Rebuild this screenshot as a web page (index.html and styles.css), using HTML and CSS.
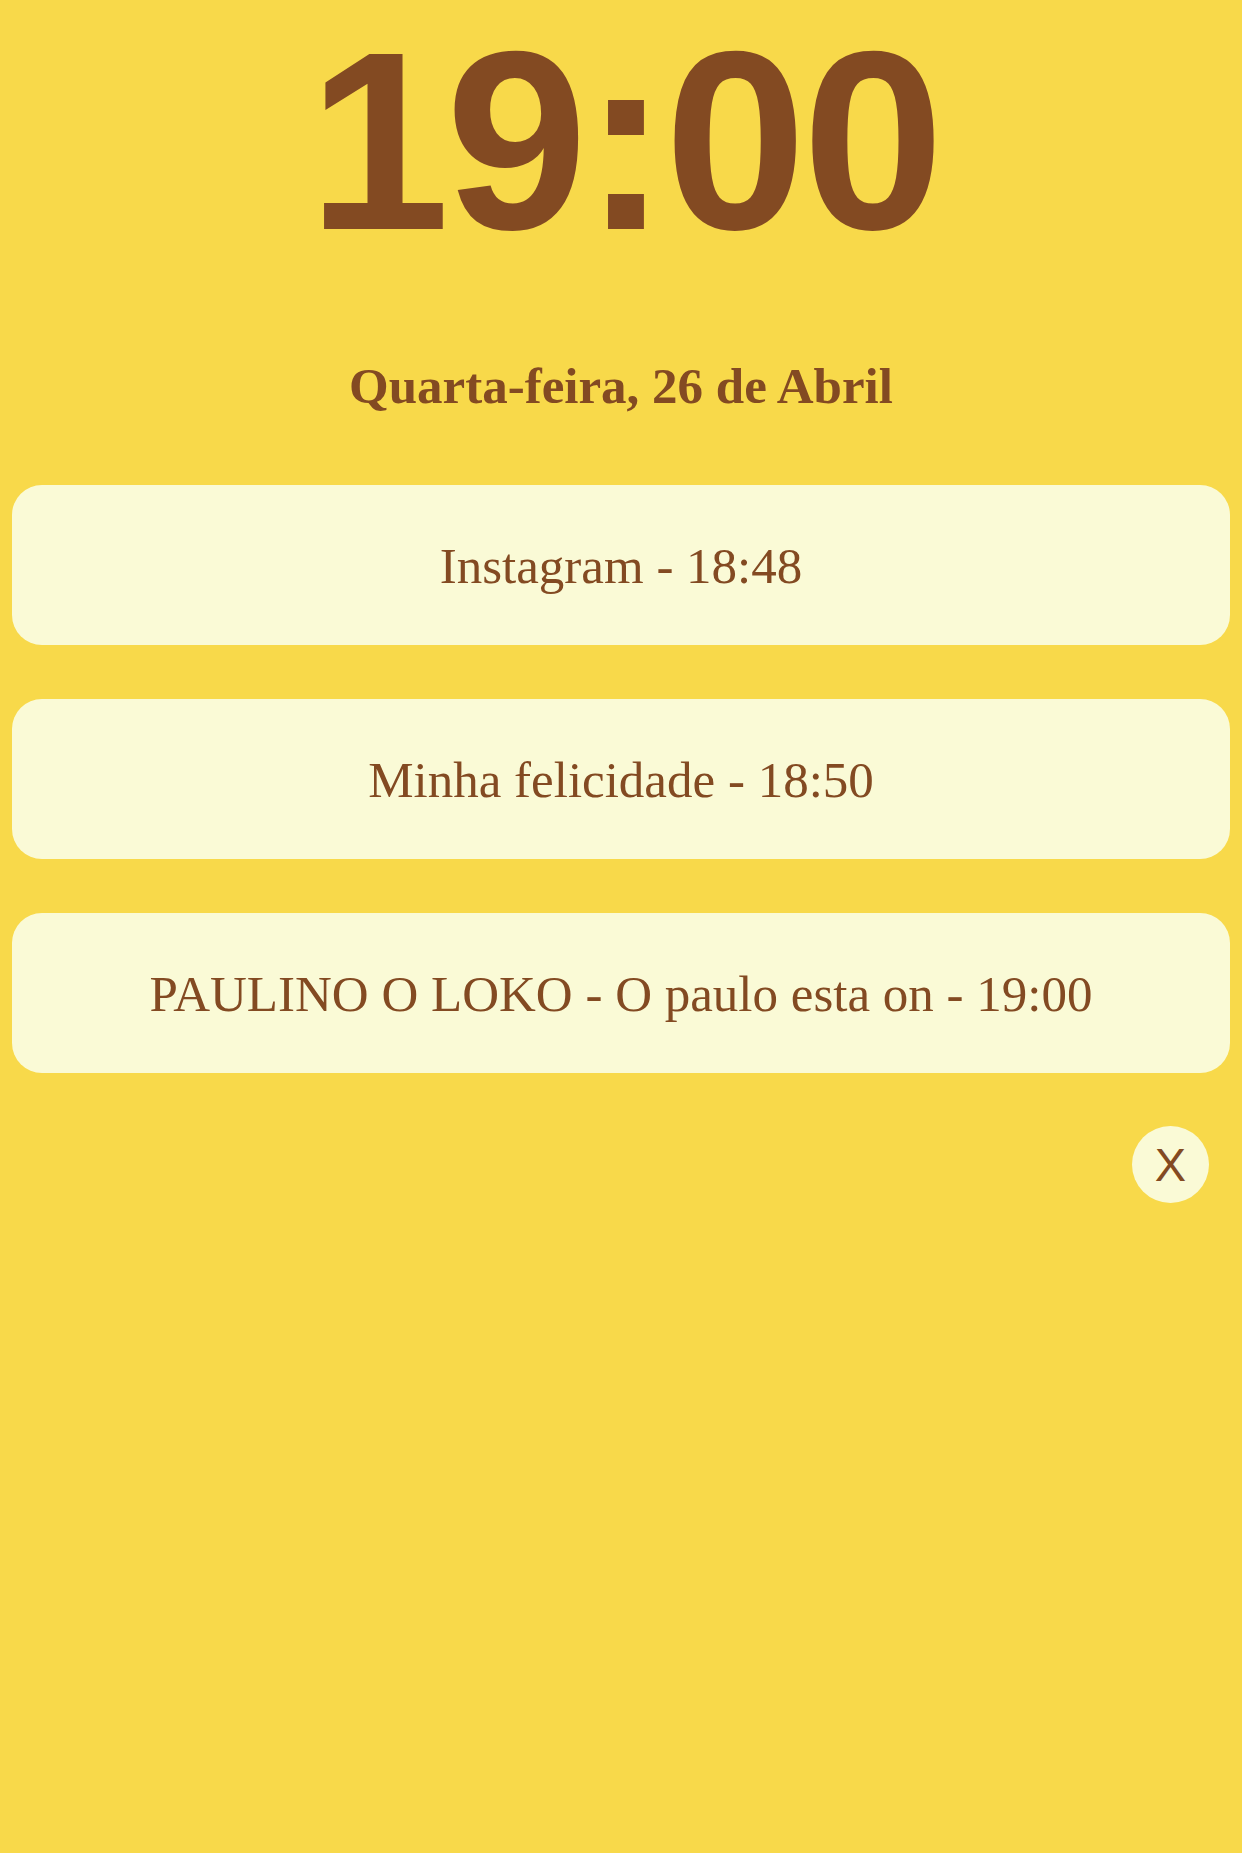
FILE: index.html
```html
<!DOCTYPE html>
<html lang="pt">
<head>
<meta charset="utf-8">
<title>Relógio</title>
<link rel="stylesheet" href="styles.css">
</head>
<body>
<main class="screen">
  <div class="clock">19:00</div>
  <div class="date">Quarta-feira, 26 de Abril</div>
  <section class="list">
    <div class="card">Instagram - 18:48</div>
    <div class="card">Minha felicidade - 18:50</div>
    <div class="card">PAULINO O LOKO - O paulo esta on - 19:00</div>
  </section>
  <div class="actions">
    <button class="close" type="button">X</button>
  </div>
</main>
</body>
</html>
```
FILE: styles.css
```css
html, body {
  margin: 0;
  padding: 0;
  background: #f8d94a;
}
body {
  min-height: 1853px;
  color: #834a22;
}
.screen {
  padding: 0 12px;
}
.clock {
  font-family: "Liberation Sans", Arial, sans-serif;
  font-weight: bold;
  font-size: 255px;
  line-height: 256px;
  letter-spacing: -4px;
  text-indent: 6px;
  text-align: center;
  margin-top: 13px;
}
.date {
  font-family: "Liberation Serif", "Times New Roman", serif;
  font-weight: bold;
  font-size: 51px;
  line-height: 60px;
  text-align: center;
  margin-top: 87px;
}
.list {
  display: flex;
  flex-direction: column;
  gap: 54px;
  margin-top: 69px;
}
.card {
  height: 160px;
  background: #fafad6;
  border-radius: 30px;
  display: flex;
  align-items: center;
  justify-content: center;
  font-family: "Liberation Serif", "Times New Roman", serif;
  font-size: 51px;
  line-height: 60px;
  padding-top: 2px;
  box-sizing: border-box;
}
.actions {
  display: flex;
  justify-content: flex-end;
  padding-right: 21px;
  margin-top: 53px;
}
.close {
  width: 77px;
  height: 77px;
  border-radius: 50%;
  border: none;
  background: #fafad6;
  color: #834a22;
  font-family: "Liberation Sans", Arial, sans-serif;
  font-size: 47px;
  line-height: 1;
  padding: 0;
  display: flex;
  align-items: center;
  justify-content: center;
}
```
